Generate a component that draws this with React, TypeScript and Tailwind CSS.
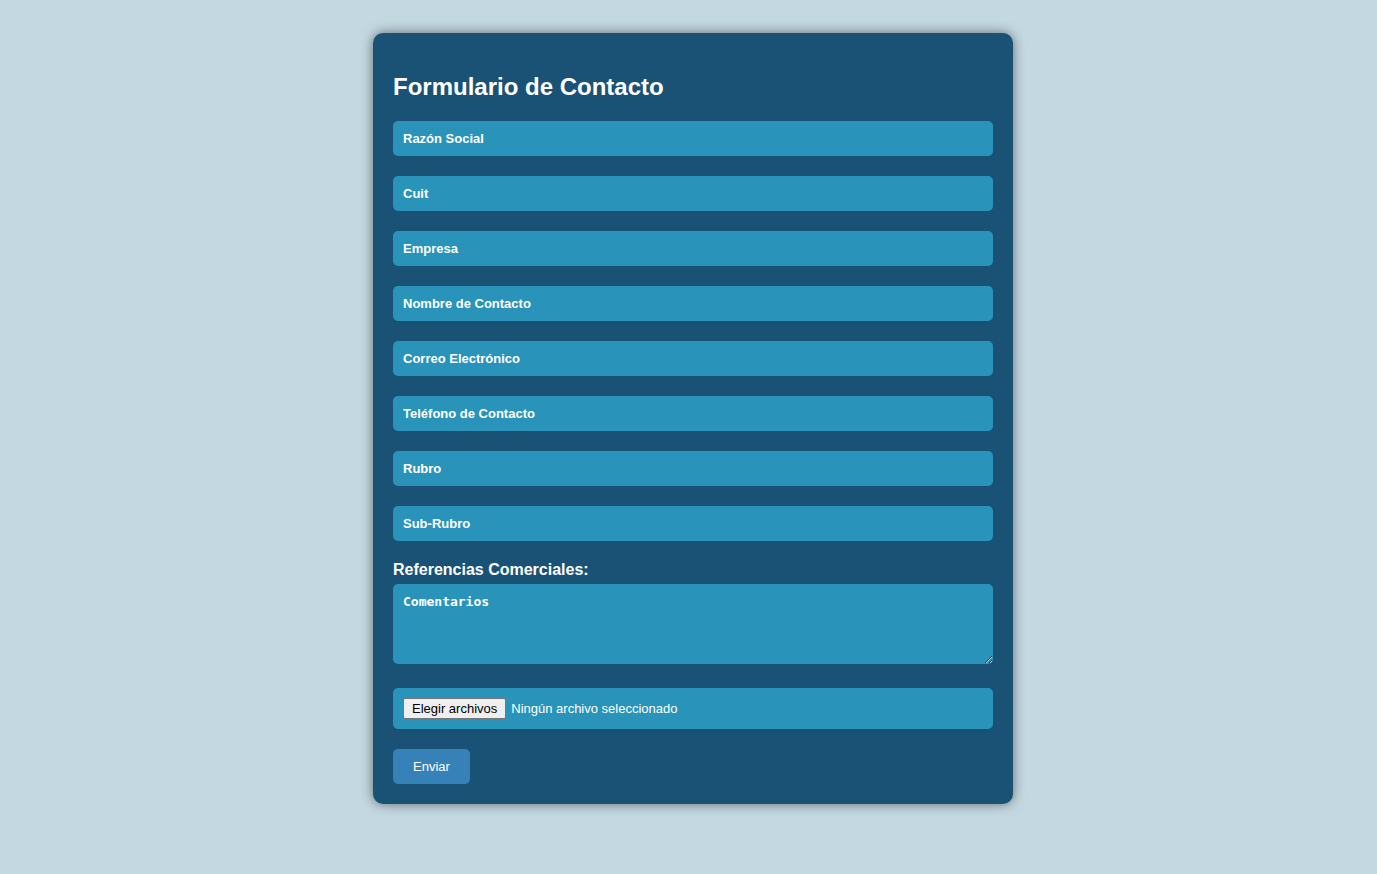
import { useRef, useState } from 'react';

const fields = [
  { id: 'razon-social', label: 'Razón Social', type: 'text' },
  { id: 'cuit', label: 'Cuit', type: 'text' },
  { id: 'empresa', label: 'Empresa', type: 'text' },
  { id: 'nombre', label: 'Nombre de Contacto', type: 'text' },
  { id: 'correo', label: 'Correo Electrónico', type: 'email' },
  { id: 'telefono', label: 'Teléfono de Contacto', type: 'tel' },
  { id: 'rubro', label: 'Rubro', type: 'text' },
  { id: 'sub-rubro', label: 'Sub-Rubro', type: 'text' },
];

function FilePicker() {
  const inputRef = useRef<HTMLInputElement>(null);
  const [status, setStatus] = useState('Ningún archivo seleccionado');

  return (
    <div className="flex items-center gap-[5px] rounded-[5px] bg-[#2993ba] p-2.5 text-[13px] leading-[15px]">
      <input
        ref={inputRef}
        type="file"
        multiple
        hidden
        aria-label="Elegir archivos"
        onChange={(e) => {
          const files = e.target.files;
          if (!files || files.length === 0) setStatus('Ningún archivo seleccionado');
          else setStatus(files.length === 1 ? files[0].name : `${files.length} archivos`);
        }}
      />
      <button
        type="button"
        onClick={() => inputRef.current?.click()}
        className="rounded-[2px] border border-[#767676] bg-[#efefef] px-2 py-[2px] text-black"
      >
        Elegir archivos
      </button>
      <span>{status}</span>
    </div>
  );
}

export default function App() {
  return (
    <main className="min-h-screen bg-[#c4d8e1] pt-[33px] pr-[15px] pb-[70px] pl-6 font-['Liberation_Sans',Arial,sans-serif] text-white">
      <form
        onSubmit={(e) => e.preventDefault()}
        className="mx-auto max-w-[640px] rounded-[10px] bg-[#1a5276] px-5 pt-10 pb-5 shadow-[0_0_12px_rgba(0,0,0,0.5)]"
      >
        <h2 className="mb-5 text-2xl leading-7 font-bold">Formulario de Contacto</h2>
        <div className="flex flex-col gap-5">
          {fields.map((f) => (
            <input
              key={f.id}
              id={f.id}
              name={f.id}
              type={f.type}
              placeholder={f.label}
              aria-label={f.label}
              className="block h-[35px] w-full rounded-[5px] bg-[#2993ba] px-2.5 text-[13px] font-normal placeholder:font-bold placeholder:text-white"
            />
          ))}
        </div>
        <div className="mt-5 mb-6">
          <label htmlFor="comentarios" className="mb-[5px] block text-base leading-[18px] font-bold">
            Referencias Comerciales:
          </label>
          <textarea
            id="comentarios"
            name="comentarios"
            placeholder="Comentarios"
            className="block h-20 w-full resize-y rounded-[5px] bg-[#2993ba] p-2.5 font-['DejaVu_Sans_Mono',monospace] text-[13px] leading-[15px] placeholder:font-bold placeholder:text-white"
          />
        </div>
        <FilePicker />
        <button type="submit" className="mt-5 block h-[35px] rounded-[5px] bg-[#3682b8] px-5 text-[13px]">
          Enviar
        </button>
      </form>
    </main>
  );
}
